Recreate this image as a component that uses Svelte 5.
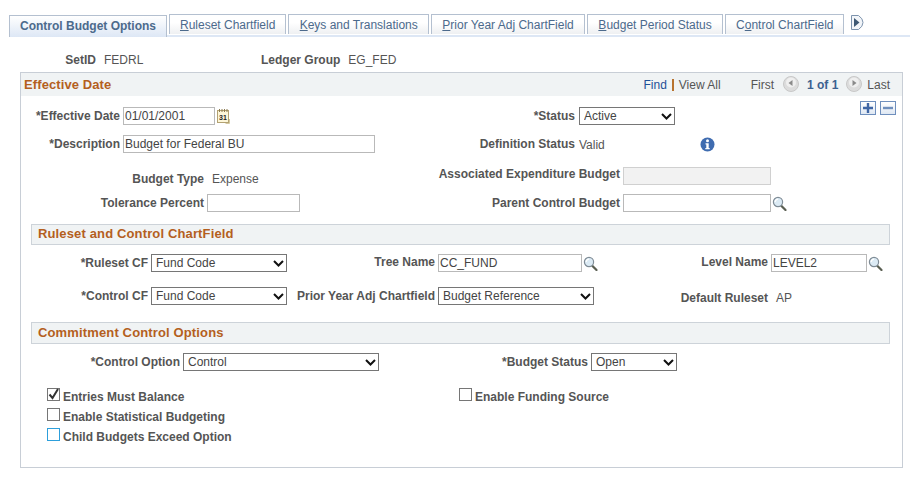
<script>
  const tabs = [
    { before: '', key: 'R', after: 'uleset Chartfield' },
    { before: '', key: 'K', after: 'eys and Translations', wide: true },
    { before: '', key: 'P', after: 'rior Year Adj ChartField', wide: true },
    { before: '', key: 'B', after: 'udget Period Status', wide: true },
    { before: 'C', key: 'o', after: 'ntrol ChartField' }
  ];
</script>

{#snippet lookup()}
  <svg class="lookup" width="15" height="15" viewBox="0 0 15 15">
    <path d="M9 9.5l4.5 4.5" stroke="#5a5f52" stroke-width="2.2" stroke-linecap="round" />
    <circle cx="6" cy="6" r="4.6" fill="#dcebf5" stroke="#7f8c96" stroke-width="1.2" />
    <path d="M3.2 6a2.8 2.8 0 0 1 2.8-2.8" fill="none" stroke="#fff" stroke-width="1.2" />
  </svg>
{/snippet}

{#snippet navArrow(points)}
  <svg class="nav-arrow" width="16" height="16" viewBox="0 0 16 16">
    <circle cx="8" cy="8" r="7.5" fill="#dcdcdc" stroke="#c8c8c8" />
    <circle cx="8" cy="6.5" r="5" fill="#efefef" />
    <polygon {points} fill="#8a8a8a" />
  </svg>
{/snippet}

{#snippet dropdown(value, size)}
  <span class="dropdown {size}">
    <select><option>{value}</option></select>
    <svg width="11" height="7" viewBox="0 0 11 7">
      <path d="M1 1l4.500 4.500L10 1" fill="none" stroke="#111" stroke-width="2" />
    </svg>
  </span>
{/snippet}

<div class="page">
  <div class="tabs">
    <div class="tab active">Control Budget Options</div>
    {#each tabs as tab}
      <div class="tab" class:wide={tab.wide}>{tab.before}<u>{tab.key}</u>{tab.after}</div>
    {/each}
    <svg class="tab-more" width="13" height="15" viewBox="0 0 13 15">
      <path d="M.5.5h7q4.5 3 4.5 7t-4.5 7h-7z" fill="#f2f5f9" stroke="#7d93ad" />
      <polygon points="3,3 3,12 8.500,7.500" fill="#3e5873" />
    </svg>
  </div>

  <div class="keys">
    <span class="label setid">SetID</span>
    <span class="value">FEDRL</span>
    <span class="label ledger">Ledger Group</span>
    <span class="value">EG_FED</span>
  </div>

  <div class="panel">
    <div class="panel-head">
      <span class="panel-title">Effective Date</span>
      <div class="pager">
        <span class="find">Find</span>
        <span class="sep"></span>
        <span class="view-all">View All</span>
        <span class="first">First</span>
        {@render navArrow('9.5,4 9.5,10 5.5,7')}
        <span class="count">1 of 1</span>
        {@render navArrow('6.5,4 6.5,10 10.5,7')}
        <span>Last</span>
      </div>
    </div>

    <div class="row row-top gap-11">
      <span class="label">*Effective Date</span>
      <div class="control">
        <input class="date" value="01/01/2001" />
        <svg class="calendar" width="13" height="15" viewBox="0 0 13 15">
          <rect x=".5" y="1.5" width="11" height="12" fill="#fdf6d8" stroke="#b3a273" />
          <path d="M2.5 0v3M5 0v3M7.5 0v3M10 0v3" stroke="#8b7a50" />
          <path d="M12.5 10v4.500h-4" fill="none" stroke="#d5c9a0" />
          <text x="2" y="11" class="cal-day">31</text>
        </svg>
      </div>
      <span class="label">*Status</span>
      {@render dropdown('Active', 's-status')}
      <div class="row-actions">
        <span class="mini">
          <svg width="10" height="10" viewBox="0 0 10 10"><path d="M5 0v10M0 5h10" stroke="#3f66a5" stroke-width="2.4" /></svg>
        </span>
        <span class="mini">
          <svg width="10" height="10" viewBox="0 0 10 10"><path d="M0 5h10" stroke="#6f8fbd" stroke-width="2.4" /></svg>
        </span>
      </div>
    </div>

    <div class="row row-top gap-10">
      <span class="label">*Description</span>
      <input class="description" value="Budget for Federal BU" />
      <span class="label">Definition Status</span>
      <div class="control valid">
        <span class="valid-text">Valid</span>
        <svg width="15" height="15" viewBox="0 0 15 15">
          <circle cx="7.500" cy="7.500" r="7" fill="#3f6cb0" />
          <circle cx="7.500" cy="3.800" r="1.500" fill="#fff" />
          <path d="M5.500 6.300h3.200v4.700h1v1.200h-4.400v-1.200h1v-3.500h-.8z" fill="#fff" />
        </svg>
      </div>
    </div>

    <div class="row row-budget gap-13">
      <span class="label low">Budget Type</span>
      <span class="value budget-type low">Expense</span>
      <span class="label assoc">Associated Expenditure Budget</span>
      <input class="wide-field" disabled />
    </div>

    <div class="row row-budget gap-10">
      <span class="label">Tolerance Percent</span>
      <input class="tolerance" />
      <span class="label">Parent Control Budget</span>
      <div class="control">
        <input class="wide-field" />
        {@render lookup()}
      </div>
    </div>

    <h2 class="section">Ruleset and Control ChartField</h2>

    <div class="row row-chart gap-9">
      <span class="label">*Ruleset CF</span>
      {@render dropdown('Fund Code', 's-chart')}
      <span class="label raised">Tree Name</span>
      <div class="control">
        <input class="tree" value="CC_FUND" />
        {@render lookup()}
      </div>
      <span class="label raised">Level Name</span>
      <div class="control">
        <input class="level" value="LEVEL2" />
        {@render lookup()}
      </div>
    </div>

    <div class="row row-chart gap-14">
      <span class="label">*Control CF</span>
      {@render dropdown('Fund Code', 's-chart')}
      <span class="label">Prior Year Adj Chartfield</span>
      {@render dropdown('Budget Reference', 's-prior')}
      <span class="label ruleset">Default Ruleset</span>
      <span class="value ruleset">AP</span>
    </div>

    <h2 class="section commitment">Commitment Control Options</h2>

    <div class="row row-commit gap-9">
      <span class="label">*Control Option</span>
      {@render dropdown('Control', 's-option')}
      <span class="label">*Budget Status</span>
      {@render dropdown('Open', 's-budget')}
    </div>

    <div class="checks">
      <label class="check">
        <span class="box">
          <svg width="13" height="13" viewBox="0 0 13 13"><path d="M2.500 6.500l3 3.500 5.500-9" fill="none" stroke="#333" stroke-width="2" /></svg>
        </span>
        Entries Must Balance
      </label>
      <label class="check"><span class="box"></span>Enable Funding Source</label>
      <label class="check"><span class="box"></span>Enable Statistical Budgeting</label>
      <span></span>
      <label class="check"><span class="box focus"></span>Child Budgets Exceed Option</label>
    </div>
  </div>
</div>

<style>
  :global(body) {
    background: #fff;
    color: #555;
    font: 12px "Liberation Sans", Arial, sans-serif;
  }

  .page {
    width: 910px;
    height: 480px;
    overflow: hidden;
    padding-top: 14px;
    box-sizing: border-box;
  }

  .tabs {
    display: flex;
    align-items: flex-start;
    gap: 2px;
    height: 21px;
    margin-left: 9px;
    border-bottom: 2px solid #dde7f5;
  }

  .tab {
    box-sizing: border-box;
    height: 20px;
    padding: 1px 10px 0;
    border: 1px solid #b4c0d0;
    border-bottom: 0;
    background: linear-gradient(#fff, #fff 40%, #eef0f2);
    color: #4c6a8c;
    line-height: 19px;
    white-space: nowrap;
  }

  .tab.wide {
    padding: 1px 10.3px 0;
  }

  .tab.active {
    height: 22px;
    margin-top: 1px;
    padding: 0 10px;
    background: linear-gradient(#fff, #dde7f5);
    font-weight: bold;
    line-height: 20px;
  }

  .tab-more {
    margin: 1px 0 0 5px;
  }

  .keys {
    display: flex;
    box-sizing: border-box;
    height: 35px;
    padding-top: 11px;
    align-items: center;
  }

  .label {
    color: #555;
    font-weight: bold;
    text-align: right;
    white-space: nowrap;
  }

  .value {
    padding-left: 8px;
    white-space: nowrap;
  }

  .keys .setid {
    width: 96px;
  }

  .keys .ledger {
    width: 197px;
  }

  .panel {
    box-sizing: border-box;
    width: 883px;
    height: 396px;
    margin-left: 20px;
    border: 1px solid #c8ced6;
  }

  .panel-head {
    display: flex;
    align-items: center;
    justify-content: space-between;
    height: 23px;
    padding: 0 12px 0 3px;
    background: #f0f3f4;
  }

  .panel-title {
    color: #b45f1e;
    font-size: 13px;
    font-weight: bold;
    letter-spacing: 0.1px;
  }

  .pager {
    display: flex;
    align-items: center;
    padding-top: 1px;
  }

  .find {
    color: #1f4f97;
  }

  .sep {
    width: 2px;
    height: 12px;
    margin: 0 5px 0 5px;
    background: #b8732f;
  }

  .first {
    margin-left: 30px;
  }

  .count {
    margin: 0 8px;
    color: #3c6190;
    font-weight: bold;
  }

  .nav-arrow {
    margin: -3px 0 0 9px;
  }

  .count + .nav-arrow {
    margin: -3px 5px 0 0;
  }

  .row {
    display: grid;
    align-items: center;
    height: 18px;
  }

  .row > .label {
    padding-right: 3px;
  }

  .gap-9 { margin-top: 9px; }
  .gap-10 { margin-top: 10px; }
  .gap-11 { margin-top: 11px; }
  .gap-13 { margin-top: 13px; }
  .gap-14 { margin-top: 14px; }

  .row-top {
    grid-template-columns: 102px 300px 156px 136px 1fr;
  }

  .row-top > .label:nth-of-type(2) {
    padding-right: 4px;
  }

  .row-budget {
    grid-template-columns: 186px 216px 200px 1fr;
  }

  .row-chart {
    grid-template-columns: 130px 145px 142px 173px 160px 1fr;
  }

  .row-commit {
    grid-template-columns: 162px 248px 160px 1fr;
  }

  .row-commit > .label:nth-of-type(2) {
    padding-right: 4px;
  }

  .control {
    display: flex;
    align-items: center;
  }

  input {
    box-sizing: border-box;
    height: 18px;
    margin: 0;
    padding: 0 1px;
    border: 1px solid #b9b9b9;
    border-radius: 0;
    background: #fff;
    color: #444;
    font: 12px "Liberation Sans", Arial, sans-serif;
  }

  input:disabled {
    background: #f2f2f2;
    border-color: #d0d0d0;
  }

  .dropdown {
    position: relative;
    display: block;
    height: 18px;
  }

  .dropdown svg {
    position: absolute;
    top: 6px;
    right: 3px;
    pointer-events: none;
  }

  select {
    appearance: none;
    display: block;
    box-sizing: border-box;
    width: 100%;
    height: 18px;
    margin: 0;
    padding: 0 0 0 4px;
    border: 1px solid #767676;
    border-radius: 0;
    background: #fff;
    color: #444;
    font: 12px "Liberation Sans", Arial, sans-serif;
  }

  .date { width: 92px; }
  .description { width: 252px; }
  .tolerance { width: 93px; }
  .wide-field { width: 148px; }
  .tree { width: 144px; }
  .level { width: 96px; }
  .s-status { width: 96px; }
  .s-chart { width: 136px; }
  .s-prior { width: 156px; }
  .s-option { width: 196px; }
  .s-budget { width: 86px; }

  .calendar {
    margin-left: 2px;
  }

  .cal-day {
    fill: #222;
    font: bold 7px "Liberation Sans", Arial, sans-serif;
  }

  .lookup {
    margin-left: 1px;
  }

  .valid {
    justify-content: space-between;
  }

  .valid-text {
    padding-top: 1px;
  }

  .row-actions {
    display: flex;
    align-self: start;
    justify-content: flex-end;
    gap: 4px;
    margin-top: -6px;
    padding-right: 6px;
  }

  .mini {
    display: flex;
    align-items: center;
    justify-content: center;
    box-sizing: border-box;
    width: 16px;
    height: 14px;
    border: 1px solid #6f8fbd;
    background: linear-gradient(#fff, #dfe8f3);
  }

  .budget-type {
    padding-left: 5px;
  }

  .low {
    padding-top: 6px;
  }

  .row > .raised {
    padding-bottom: 2px;
  }

  .row > .assoc {
    margin-left: -40px;
    padding-bottom: 4px;
  }

  .section {
    box-sizing: border-box;
    height: 21px;
    margin: 12px 12px 0 10px;
    padding-left: 6px;
    border: 1px solid #cdd3d9;
    background: #f0f3f4;
    color: #b45f1e;
    font-size: 13px;
    font-weight: bold;
    letter-spacing: 0.14px;
    line-height: 18px;
  }

  .section.commitment {
    height: 22px;
    margin-top: 18px;
    line-height: 19px;
  }

  .row-chart .ruleset {
    padding-top: 5px;
  }

  .row-chart .value.ruleset {
    padding-left: 5px;
  }

  .checks {
    display: grid;
    grid-template-columns: 412px 1fr;
    grid-auto-rows: 20px;
    margin: 17px 0 0 26px;
  }

  .check {
    display: flex;
    align-items: flex-start;
    gap: 3px;
    color: #555;
    font-weight: bold;
    line-height: 19px;
  }

  .box {
    box-sizing: border-box;
    flex: none;
    width: 13px;
    height: 13px;
    border: 1px solid #767676;
    background: #fff;
  }

  .box svg {
    display: block;
    margin: -1px;
  }

  .box.focus {
    border-color: #2d9fdb;
  }
</style>
